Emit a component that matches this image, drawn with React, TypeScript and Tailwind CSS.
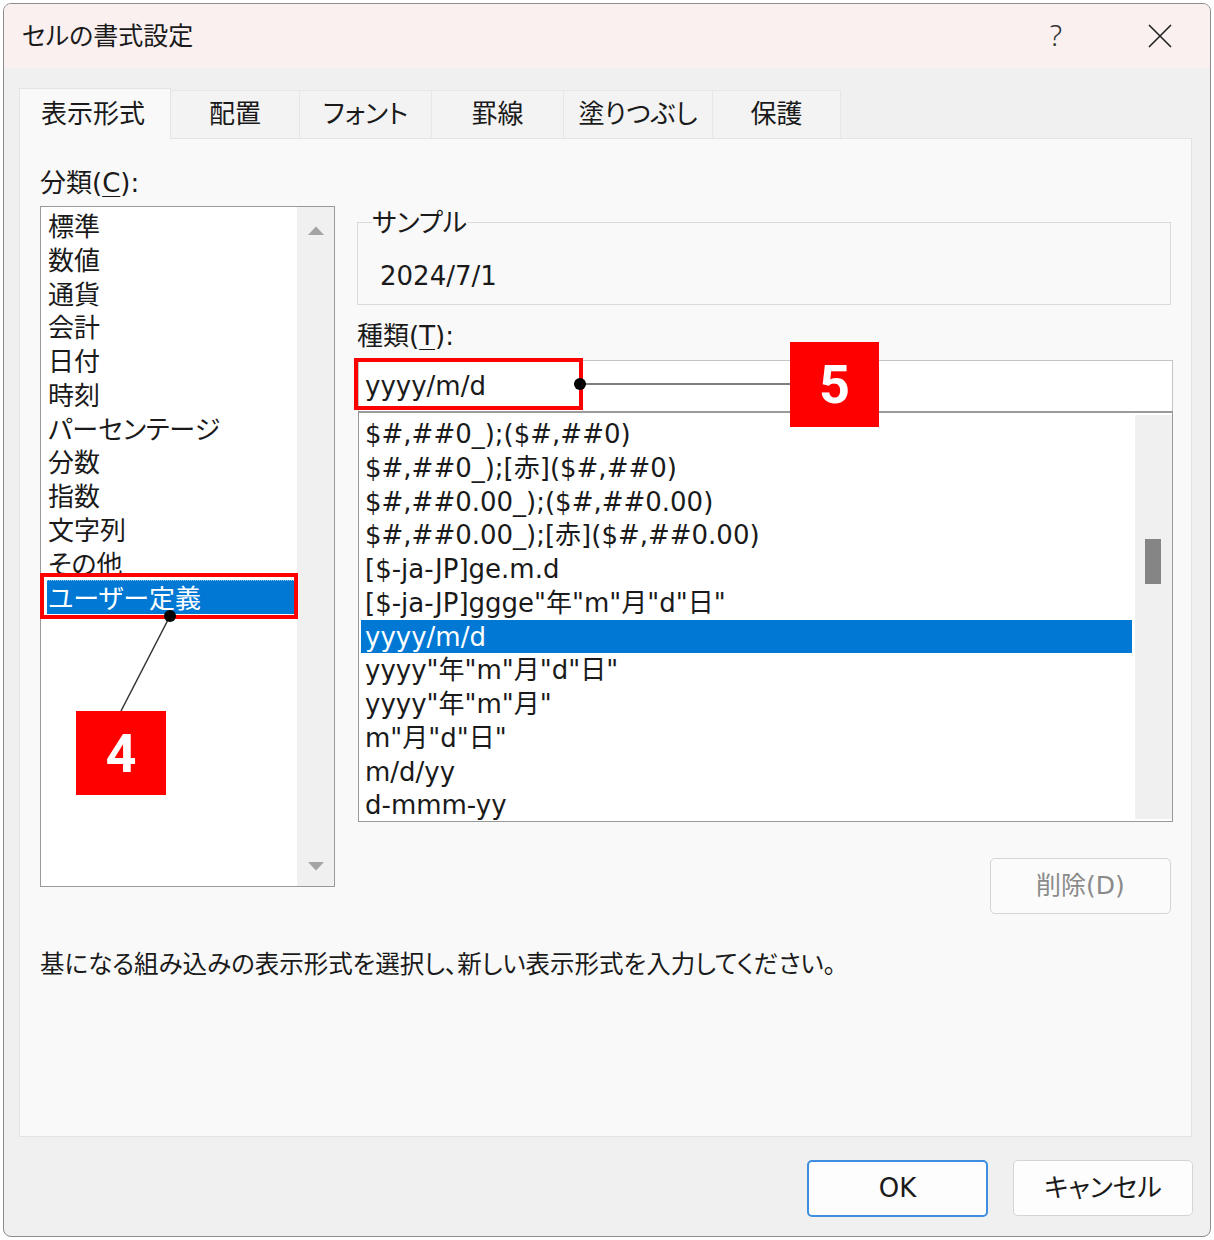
import React from "react";

const categories = [
  "標準",
  "数値",
  "通貨",
  "会計",
  "日付",
  "時刻",
  "パーセンテージ",
  "分数",
  "指数",
  "文字列",
  "その他",
  "ユーザー定義",
];

const formats = [
  "$#,##0_);($#,##0)",
  "$#,##0_);[赤]($#,##0)",
  "$#,##0.00_);($#,##0.00)",
  "$#,##0.00_);[赤]($#,##0.00)",
  "[$-ja-JP]ge.m.d",
  '[$-ja-JP]ggge"年"m"月"d"日"',
  "yyyy/m/d",
  'yyyy"年"m"月"d"日"',
  'yyyy"年"m"月"',
  'm"月"d"日"',
  "m/d/yy",
  "d-mmm-yy",
];

const tabs = [
  { label: "配置", w: "w-[129px]" },
  { label: "フォント", w: "w-[132px]" },
  { label: "罫線", w: "w-[132px]" },
  { label: "塗りつぶし", w: "w-[149px]" },
  { label: "保護", w: "w-[128px]" },
];

function Tri({ down }: { down?: boolean }) {
  return (
    <svg width="18" height="10" viewBox="0 0 18 10">
      {down ? (
        <path d="M1 1 L17 1 L9 9.5 Z" fill="#a3a3a3" />
      ) : (
        <path d="M9 0.5 L17 9 L1 9 Z" fill="#a3a3a3" />
      )}
    </svg>
  );
}

export default function App() {
  return (
    <div className="relative w-[1214px] h-[1240px] bg-white p-[3px] font-['DejaVu_Sans','Noto_Sans_CJK_JP',sans-serif] [font-feature-settings:'palt'] text-[#1a1a1a]">
      <div className="h-full rounded-[8px] border border-[#8c8c8c] bg-[#f0f0f0] overflow-hidden flex flex-col">
        {/* Title bar */}
        <div className="h-[64px] shrink-0 bg-[#f9f0ef] flex items-center pl-[18px] pr-[38px]">
          <div className="text-[25px] leading-none">セルの書式設定</div>
          <div className="ml-auto -mt-[3px] text-[29px] leading-none text-[#333] font-light font-['Noto_Sans',sans-serif]">?</div>
          <svg className="ml-[86px]" width="24" height="24" viewBox="0 0 24 24">
            <path d="M1 1 L23 23 M23 1 L1 23" stroke="#222" strokeWidth="1.6" fill="none" />
          </svg>
        </div>

        {/* Body */}
        <div className="flex-1 pt-[20px] pl-[15px] pr-[18px] flex flex-col">
          {/* Tabs */}
          <div className="flex items-end h-[50px]">
            <div className="relative z-10 -mb-px w-[152px] h-[51px] bg-[#f9f9f9] border border-b-0 border-[#e3e3e3] flex items-center justify-center text-[26px] pr-[4px]">
              表示形式
            </div>
            {tabs.map((t) => (
              <div
                key={t.label}
                className={`${t.w} h-[48px] bg-[#f3f3f3] border-t border-r border-[#e6e6e6] flex items-center justify-center text-[26px]`}
              >
                {t.label}
              </div>
            ))}
          </div>

          {/* Panel */}
          <div className="w-[1173px] h-[999px] bg-[#f9f9f9] border border-[#e3e3e3] px-[20px] flex flex-col">
            <div className="flex gap-[22px]">
              {/* Left column */}
              <div className="w-[295px] shrink-0 pt-[27px] flex flex-col">
                <div className="h-[34px] leading-[34px] text-[26px]">
                  分類(<span className="underline underline-offset-[4px] decoration-1">C</span>):
                </div>
                <div className="mt-[6px] h-[681px] bg-white border border-[#9a9a9a] flex">
                  <div className="flex-1 pl-[6px] pr-[3px] pt-[2px]">
                    {categories.map((c) => {
                      const sel = c === "ユーザー定義";
                      return (
                        <div
                          key={c}
                          className={`h-[33.75px] leading-[36px] pl-[1px] text-[26px] whitespace-nowrap ${
                            sel ? "bg-[#0078d4] text-white border-t border-dotted border-[#9cc4ee]" : ""
                          }`}
                        >
                          {c}
                        </div>
                      );
                    })}
                  </div>
                  <div className="w-[37px] bg-[#f0f0f0] flex flex-col items-center justify-between pt-[19px] pb-[15px]">
                    <Tri />
                    <Tri down />
                  </div>
                </div>
              </div>

              {/* Right column */}
              <div className="w-[814px] shrink-0 pt-[66px] flex flex-col">
                <fieldset className="h-[100px] border border-[#dadada] pl-[14px]">
                  <legend className="h-[34px] leading-[37px] text-[26px] px-0">サンプル</legend>
                  <div className="mt-[20px] pl-[8px] h-[34px] leading-[35px] text-[26px]">2024/7/1</div>
                </fieldset>
                <div className="mt-[14px] h-[34px] leading-[35px] text-[26px]">
                  種類(<span className="underline underline-offset-[4px] decoration-1">T</span>):
                </div>
                <div className="mt-[7px] ml-[1px] w-[815px] h-[51px] bg-white border border-b-0 border-[#c4c4c4] flex items-center pl-[6px] pt-[1px] text-[26px]">
                  yyyy/m/d
                </div>
                <div className="ml-[1px] w-[815px] h-[411px] bg-white border border-t-2 border-[#9a9a9a] flex overflow-hidden">
                  <div className="flex-1 pl-[2px] pr-[3px] pt-[4px]">
                    {formats.map((f) => {
                      const sel = f === "yyyy/m/d";
                      return (
                        <div
                          key={f}
                          className={`h-[33.75px] leading-[35.5px] pl-[4px] text-[26px] whitespace-nowrap ${
                            sel ? "bg-[#0078d4] text-white" : ""
                          }`}
                        >
                          {f}
                        </div>
                      );
                    })}
                  </div>
                  <div className="w-[37px] bg-[#f0f0f0] my-[2px] pl-[10px]">
                    <div className="mt-[124px] w-[16px] h-[45px] bg-[#858585]" />
                  </div>
                </div>
                <div className="self-end mt-[36px] w-[181px] h-[56px] rounded-[5px] border border-[#d4d4d4] bg-[#fbfbfb] flex items-center justify-center text-[25px] text-[#8a8a8a]">
                  削除(D)
                </div>
              </div>
            </div>

            <div className="mt-[33px] h-[34px] leading-[36px] text-[24.5px]">
              基になる組み込みの表示形式を選択し、新しい表示形式を入力してください。
            </div>
          </div>

          {/* Buttons */}
          <div className="mt-[23px] flex justify-end gap-[25px] -mr-px">
            <div className="w-[181px] h-[57px] rounded-[5px] border-2 border-[#3d8ee0] bg-[#fdfdfd] flex items-center justify-center text-[26px]">
              OK
            </div>
            <div className="w-[180px] h-[56px] rounded-[5px] border border-[#d4d4d4] bg-[#fdfdfd] flex items-center justify-center text-[26px]">
              キャンセル
            </div>
          </div>
        </div>
      </div>

      {/* Annotations */}
      <div className="absolute left-[40px] top-[573px] w-[258px] h-[46px] border-4 border-[#ff0000]" />
      <div className="absolute left-[354px] top-[358px] w-[229px] h-[52px] border-4 border-[#ff0000]" />
      <svg className="absolute left-0 top-0 pointer-events-none" width="1214" height="1240">
        <line x1="170" y1="616" x2="121" y2="711" stroke="#333" strokeWidth="1.5" />
        <circle cx="170" cy="616" r="6" fill="#000" />
        <line x1="580" y1="384" x2="790" y2="384" stroke="#555" strokeWidth="1.5" />
        <circle cx="580" cy="384" r="6" fill="#000" />
      </svg>
      <div className="absolute left-[76px] top-[711px] w-[90px] h-[84px] bg-[#ff0000] flex items-center justify-center text-white text-[54px] font-bold font-['Roboto',sans-serif]">
        4
      </div>
      <div className="absolute left-[790px] top-[342px] w-[89px] h-[85px] bg-[#ff0000] flex items-center justify-center text-white text-[54px] font-bold font-['Roboto',sans-serif]">
        5
      </div>
    </div>
  );
}
